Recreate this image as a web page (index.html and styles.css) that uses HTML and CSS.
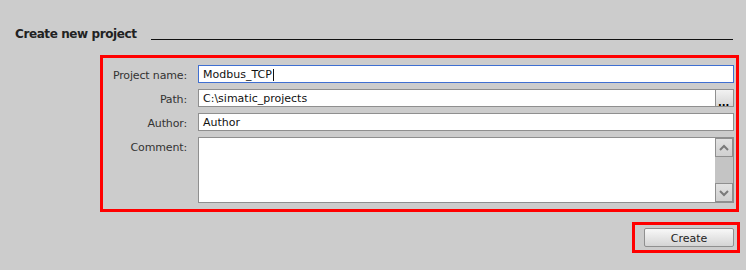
FILE: index.html
```html
<!DOCTYPE html>
<html lang="en">
<head>
  <meta charset="UTF-8">
  <title>Create new project</title>
  <link rel="stylesheet" href="styles.css">
</head>
<body>
  <!-- Cabecalho da secao -->
  <div class="section-head">
    <span class="section-title">Create new project</span>
    <span class="section-line"></span>
  </div>

  <!-- Formulario marcado -->
  <div class="form-box">
    <div class="form-grid">
      <label class="field-label">Project name:</label>
      <div class="field field-active">Modbus_TCP<span class="caret"></span></div>

      <label class="field-label">Path:</label>
      <div class="field field-path">
        <span class="field-text">C:\simatic_projects</span>
        <span class="browse-btn"><span class="dots">...</span></span>
      </div>

      <label class="field-label">Author:</label>
      <div class="field">Author</div>

      <label class="field-label">Comment:</label>
      <div class="field field-comment">
        <div class="scrollbar">
          <div class="scroll-btn">
            <svg width="12" height="8" viewBox="0 0 12 8"><path d="M2 6 L6 2 L10 6" fill="none" stroke="#7a7a7a" stroke-width="2"/></svg>
          </div>
          <div class="scroll-track"></div>
          <div class="scroll-btn">
            <svg width="12" height="8" viewBox="0 0 12 8"><path d="M2 2 L6 6 L10 2" fill="none" stroke="#7a7a7a" stroke-width="2"/></svg>
          </div>
        </div>
      </div>
    </div>
  </div>

  <!-- Botao criar -->
  <div class="actions">
    <div class="create-box">
      <button class="create-btn">Create</button>
    </div>
  </div>
</body>
</html>
```

FILE: styles.css
```css
* {
  box-sizing: border-box;
}

body {
  margin: 0;
  background: #cccccc;
  font-family: "DejaVu Sans", sans-serif;
  font-size: 11px;
  color: #2a2a2a;
}

/* Cabecalho */
.section-head {
  display: flex;
  align-items: flex-end;
  padding: 26px 13px 0 15px;
  height: 41px;
}

.section-title {
  font-weight: bold;
  font-size: 12px;
  letter-spacing: -0.4px;
  color: #222;
  line-height: 14px;
}

.section-line {
  flex: 1;
  margin-left: 14px;
  margin-bottom: 1px;
  border-bottom: 1px solid #111;
}

/* Caixa do formulario */
.form-box {
  margin: 14px 7px 0 100px;
  border: 3px solid #ff0000;
  padding: 7px 2px 6px 0;
}

.form-grid {
  display: grid;
  grid-template-columns: 84px 1fr;
  column-gap: 11px;
  row-gap: 6px;
}

.field-label {
  text-align: right;
  height: 18px;
  line-height: 18px;
  padding-top: 2px;
  letter-spacing: -0.15px;
  color: #333;
}

.field {
  height: 18px;
  background: #fff;
  border: 1px solid #8f8f8f;
  padding: 2px 4px 0;
  line-height: 16px;
  color: #111;
  display: flex;
  align-items: center;
}

.field-active {
  border-color: #3f6fd1;
}

.caret {
  display: inline-block;
  width: 1px;
  height: 12px;
  background: #111;
  margin-left: 1px;
}

.field-path {
  padding-right: 0;
}

.field-text {
  flex: 1;
}

.browse-btn {
  width: 18px;
  height: 16px;
  margin-top: -2px;
  border-left: 1px solid #8f8f8f;
  background: linear-gradient(#f2f2f2, #d6d6d6);
  position: relative;
}

.dots {
  position: absolute;
  left: 2px;
  bottom: -1px;
  font-size: 10px;
  font-weight: bold;
  line-height: 8px;
  color: #000;
}

.field-comment {
  height: 66px;
  padding: 0;
  justify-content: flex-end;
  align-items: stretch;
}

/* Barra de rolagem */
.scrollbar {
  width: 18px;
  display: flex;
  flex-direction: column;
  background: #c4c4c4;
}

.scroll-btn {
  height: 19px;
  background: linear-gradient(#e2e2e2, #d0d0d0);
  border: 1px solid #8f8f8f;
  display: flex;
  align-items: center;
  justify-content: center;
}

.scroll-track {
  flex: 1;
}

/* Acoes */
.actions {
  display: flex;
  justify-content: flex-end;
  padding: 10px 6px 0 0;
}

.create-box {
  border: 3px solid #ff0000;
  padding: 3px 3px 3px 9px;
}

.create-btn {
  display: block;
  width: 90px;
  height: 19px;
  border: 1px solid #8f8f8f;
  border-radius: 2px;
  background: linear-gradient(#f8f8f8, #e6e6e6 50%, #d4d4d4);
  font-family: "DejaVu Sans", sans-serif;
  font-size: 11px;
  color: #222;
  padding: 1px 0 0;
}
```
